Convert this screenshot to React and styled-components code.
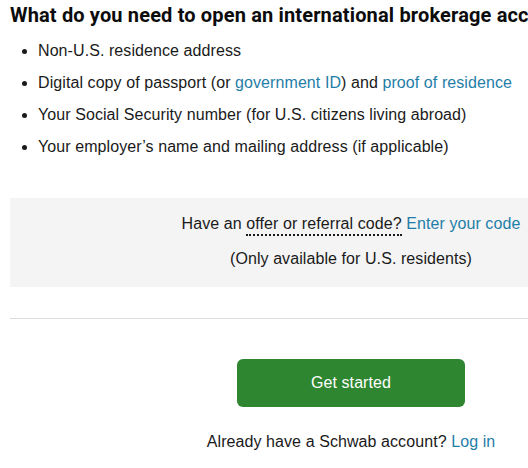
import React from 'react'
import styled, { createGlobalStyle } from 'styled-components'

const GlobalStyle = createGlobalStyle`
  body {
    margin: 0;
    background: #fff;
    font-family: "Liberation Sans", Arial, sans-serif;
    color: #1a1a1a;
    overflow: hidden;
  }
`

const Page = styled.div`
  padding-left: 10px;
  width: 682px;
  letter-spacing: 0.08px;
`

const Heading = styled.h2`
  margin: 0;
  padding-top: 1px;
  font-family: Roboto, "Liberation Sans", sans-serif;
  font-weight: 700;
  font-size: 20px;
  line-height: 28px;
  letter-spacing: 0.15px;
  color: #0c0c0c;
  white-space: nowrap;
`

const List = styled.ul`
  margin: 10px 0 0;
  padding-left: 28px;
  font-size: 16px;
  line-height: 24px;
`

const Item = styled.li`
  margin-bottom: 8px;
`

const Link = styled.a`
  color: #1f7ea8;
  text-decoration: none;
  cursor: pointer;
`

const OfferBox = styled.div`
  margin-top: 39px;
  background: #f4f4f4;
  padding: 14px 0 16px;
  text-align: center;
  font-size: 16px;
  line-height: 24px;
`

const OfferLine = styled.p`
  margin: 0 0 11px;
  &:last-child {
    margin-bottom: 0;
  }
`

const Dotted = styled.span`
  border-bottom: 2px dotted #1a1a1a;
  padding-bottom: 2px;
`

const Divider = styled.hr`
  margin: 31px 0 0;
  border: 0;
  border-top: 1px solid #dcdcdc;
`

const Actions = styled.div`
  display: flex;
  flex-direction: column;
  align-items: center;
  padding-top: 40px;
`

const PrimaryButton = styled.button`
  width: 228px;
  height: 48px;
  border: 0;
  border-radius: 6px;
  background: #2e8630;
  color: #fff;
  font-family: "Liberation Sans", Arial, sans-serif;
  font-size: 16px;
  letter-spacing: 0.08px;
  cursor: pointer;
`

const LoginLine = styled.p`
  margin: 23px 0 0;
  font-size: 16px;
  line-height: 24px;
`

export default function App() {
  return (
    <>
      <GlobalStyle />
      <Page>
        <Heading>What do you need to open an international brokerage account?</Heading>
        <List>
          <Item>Non-U.S. residence address</Item>
          <Item>
            Digital copy of passport (or <Link>government ID</Link>) and <Link>proof of residence</Link>
          </Item>
          <Item>Your Social Security number (for U.S. citizens living abroad)</Item>
          <Item>Your employer’s name and mailing address (if applicable)</Item>
        </List>
        <OfferBox>
          <OfferLine>
            Have an <Dotted>offer or referral code?</Dotted> <Link>Enter your code</Link>
          </OfferLine>
          <OfferLine>(Only available for U.S. residents)</OfferLine>
        </OfferBox>
        <Divider />
        <Actions>
          <PrimaryButton>Get started</PrimaryButton>
          <LoginLine>
            Already have a Schwab account? <Link>Log in</Link>
          </LoginLine>
        </Actions>
      </Page>
    </>
  )
}
